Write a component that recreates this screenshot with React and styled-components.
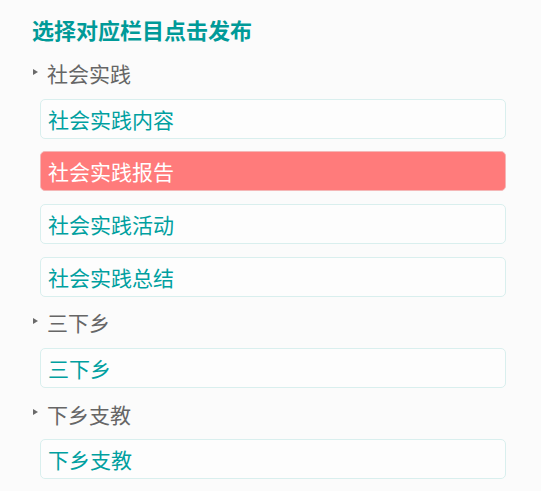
import React from "react";
import styled, { createGlobalStyle } from "styled-components";

const Global = createGlobalStyle`
  html, body { margin: 0; padding: 0; background: #fbfbfb; }
  body { font-family: "Microsoft YaHei", "Noto Sans CJK SC", "Noto Sans", sans-serif; }
`;

const Page = styled.div`
  padding: 14px 34px 0 32px;
  width: 541px;
  box-sizing: border-box;
`;

const Title = styled.h1`
  margin: 0 0 16px;
  font-size: 22px;
  line-height: 30px;
  font-weight: bold;
  color: #009a98;
`;

const List = styled.div`
  display: flex;
  flex-direction: column;
  gap: 12.67px;
`;

const Header = styled.div`
  display: flex;
  align-items: center;
  height: 26px;
  font-size: 21px;
  color: #666;
`;

const Arrow = styled.span`
  width: 0;
  height: 0;
  margin: -3px 9px 0 1px;
  border-top: 3px solid transparent;
  border-bottom: 3px solid transparent;
  border-left: 5px solid #6a6a6a;
`;

const Item = styled.div`
  box-sizing: border-box;
  height: 40px;
  margin-left: 8px;
  width: 466px;
  padding: 0 7px;
  display: flex;
  align-items: center;
  font-size: 21px;
  border-radius: 5px;
  border: 1px solid ${(p) => (p.$active ? "#f4b7b7" : "#d9efee")};
  background: ${(p) => (p.$active ? "#ff7b7b" : "#fdfdfd")};
  color: ${(p) => (p.$active ? "#ffffff" : "#00a0a0")};
`;

const sections = [
  { name: "社会实践", items: ["社会实践内容", "社会实践报告", "社会实践活动", "社会实践总结"] },
  { name: "三下乡", items: ["三下乡"] },
  { name: "下乡支教", items: ["下乡支教"] },
];

export default function App() {
  return (
    <Page>
      <Global />
      <Title>选择对应栏目点击发布</Title>
      <List>
        {sections.map((s) => (
          <React.Fragment key={s.name}>
            <Header>
              <Arrow />
              {s.name}
            </Header>
            {s.items.map((it) => (
              <Item key={it} $active={it === "社会实践报告"}>
                {it}
              </Item>
            ))}
          </React.Fragment>
        ))}
      </List>
    </Page>
  );
}
